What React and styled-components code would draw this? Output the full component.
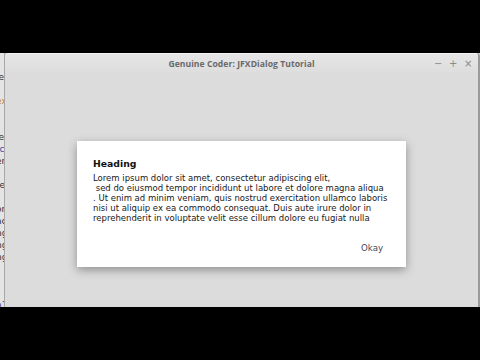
import React from 'react';
import styled, { createGlobalStyle } from 'styled-components';

const GlobalStyle = createGlobalStyle`
  html, body {
    margin: 0;
    padding: 0;
    background: #000;
  }
  body {
    font-family: "DejaVu Sans", sans-serif;
  }
`;

const Page = styled.div`
  width: 480px;
  height: 360px;
  background: #000;
  padding-top: 53px;
  box-sizing: border-box;
`;

const Screen = styled.div`
  display: flex;
  height: 254px;
  background: #cfcfcf;
`;

const BackStrip = styled.div`
  width: 4px;
  overflow: hidden;
  background: #e4e4e4;
  border-right: 1px solid #a8a8a8;
  display: flex;
  flex-direction: column;
  padding-top: 20px;
  gap: 3px;
`;

const Frag = styled.span`
  font-size: 9px;
  line-height: 9px;
  margin-left: -4px;
  color: ${(p) => p.color || '#333'};
  white-space: nowrap;
`;

const Window = styled.div`
  flex: 1;
  display: flex;
  flex-direction: column;
  background: #dcdcdc;
  border-radius: 4px 4px 0 0;
  border-right: 2px solid #9a9a9a;
  overflow: hidden;
`;

const TitleBar = styled.div`
  height: 19px;
  display: flex;
  align-items: center;
  justify-content: center;
  position: relative;
  background: linear-gradient(#e6e6e6, #dddddd);
  border-top: 1px solid #f4f4f4;
`;

const Title = styled.span`
  font-family: "Open Sans", sans-serif;
  font-weight: 700;
  font-size: 8.6px;
  color: #6a6a6a;
  letter-spacing: 0.05px;
`;

const Controls = styled.div`
  position: absolute;
  right: 6px;
  top: 0;
  height: 100%;
  display: flex;
  align-items: center;
  gap: 7px;
`;

const Ctl = styled.span`
  width: 8px;
  text-align: center;
  font-size: 10px;
  color: #8a8a8a;
`;

const Body = styled.div`
  flex: 1;
  display: flex;
  align-items: flex-start;
  justify-content: center;
  padding-top: 68px;
  padding-right: 2px;
`;

const Dialog = styled.div`
  width: 329px;
  height: 126px;
  box-sizing: border-box;
  background: #fff;
  box-shadow: 0 3px 9px rgba(0, 0, 0, 0.35);
  padding: 17px 15px 0 16px;
  display: flex;
  flex-direction: column;
  margin-left: 2px;
`;

const Heading = styled.div`
  font-weight: 700;
  font-size: 9.3px;
  color: #111;
  margin-bottom: 4px;
`;

const Text = styled.div`
  font-size: 8.5px;
  line-height: 10px;
  color: #1a1a1a;
  white-space: pre;
`;

const Actions = styled.div`
  display: flex;
  justify-content: flex-end;
  margin-top: 20px;
`;

const Okay = styled.span`
  font-size: 8.6px;
  color: #4a4656;
  margin-right: 8px;
`;

const lines = [
  'Lorem ipsum dolor sit amet, consectetur adipiscing elit,',
  ' sed do eiusmod tempor incididunt ut labore et dolore magna aliqua',
  '. Ut enim ad minim veniam, quis nostrud exercitation ullamco laboris',
  'nisi ut aliquip ex ea commodo consequat. Duis aute irure dolor in',
  'reprehenderit in voluptate velit esse cillum dolore eu fugiat nulla',
];

const frags = [
  ['le', '#333'],
  ['', '#333'],
  ['ex', '#c07a30'],
  ['i', '#3a4a9a'],
  ['', '#333'],
  ['le', '#333'],
  ['tc', '#3a4a9a'],
  ['er', '#333'],
  ['', '#333'],
  ['re', '#333'],
  ['', '#333'],
  ['or', '#333'],
  ['ac', '#333'],
  ['ng', '#333'],
  ['ng', '#333'],
  ['ng', '#333'],
  ['', '#333'],
  ['', '#333'],
  ['', '#333'],
  ['n1', '#3a4a9a'],
  ['nc', '#333'],
];

export default function App() {
  return (
    <Page>
      <GlobalStyle />
      <Screen>
        <BackStrip>
          {frags.map(([t, c], i) => (
            <Frag key={i} color={c}>
              {t || '\u00a0'}
            </Frag>
          ))}
        </BackStrip>
        <Window>
          <TitleBar>
            <Title>Genuine Coder: JFXDialog Tutorial</Title>
            <Controls>
              <Ctl>−</Ctl>
              <Ctl>+</Ctl>
              <Ctl>×</Ctl>
            </Controls>
          </TitleBar>
          <Body>
            <Dialog>
              <Heading>Heading</Heading>
              <Text>{lines.join('\n')}</Text>
              <Actions>
                <Okay>Okay</Okay>
              </Actions>
            </Dialog>
          </Body>
        </Window>
      </Screen>
    </Page>
  );
}
